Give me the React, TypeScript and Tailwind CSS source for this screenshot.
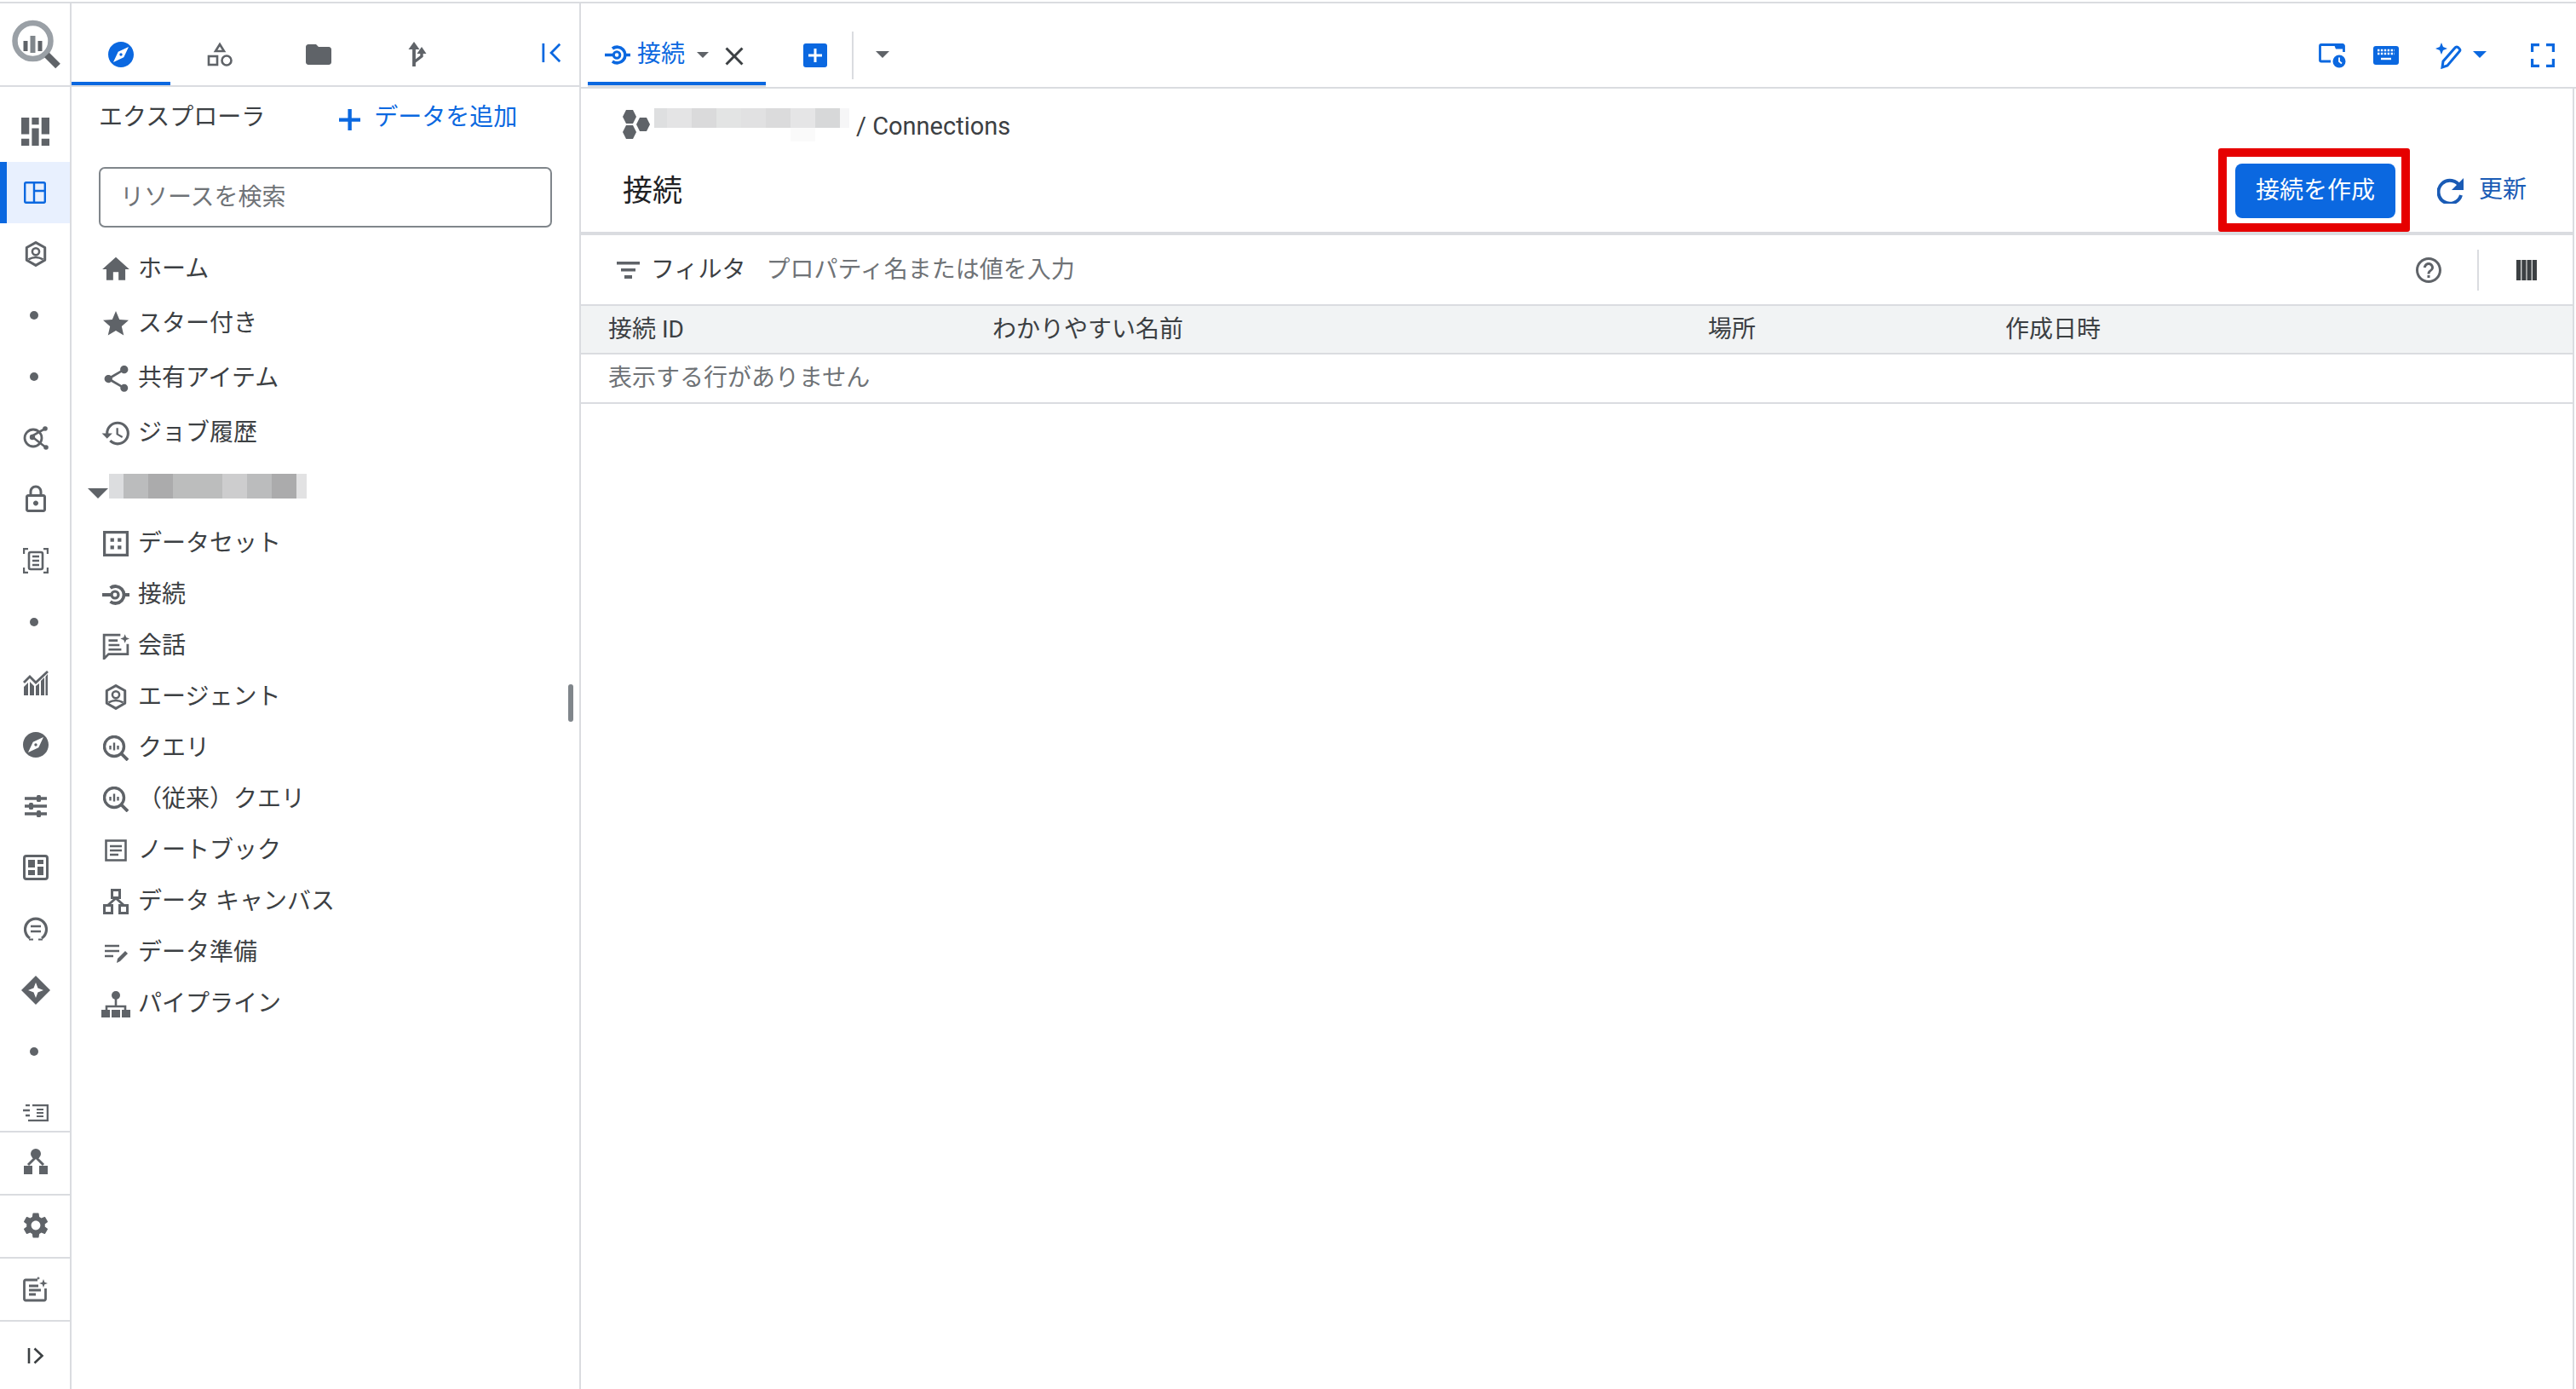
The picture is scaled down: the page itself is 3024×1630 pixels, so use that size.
import React from "react";
import {
  MdExplore, MdFolder, MdHome, MdStar, MdShare, MdHistory, MdHelpOutline, MdSettings,
  MdClose, MdOutlineLock,
} from "react-icons/md";

const Cap = ({ c = "fill-[#5f6368]", s = "w-[16px] h-[8px]" }: { c?: string; s?: string }) => (
  <svg viewBox="0 0 16 8" preserveAspectRatio="none" className={`${s} ${c}`}><path d="M0 0h16L8 8z" /></svg>
);

const S = ({ className, vb = "0 0 24 24", children }: { className: string; vb?: string; children: React.ReactNode }) => (
  <svg viewBox={vb} className={className} fill="none">{children}</svg>
);

const Dot = () => <div className="size-[10px] rounded-full bg-[#5f6368] -ml-[3px]" />;

const Agent = ({ className }: { className: string }) => (
  <S className={className} vb="0 0 24 28">
    <path d="M12 1.500l10 5.500v13.800L12 26.500 2 20.800V7z" stroke="#5f6368" strokeWidth="2.800" strokeLinejoin="round" />
    <circle cx="12" cy="11.500" r="3.800" stroke="#5f6368" strokeWidth="2.400" />
    <path d="M4 20c5-2.800 11-2.800 16 0" stroke="#5f6368" strokeWidth="2.400" />
  </S>
);

const Connection = ({ color = "#5f6368", className }: { color?: string; className: string }) => (
  <S className={className} vb="0 0 32 24">
    <path d="M0 12h12M26 12h6" stroke={color} strokeWidth="3.800" />
    <circle cx="15" cy="12" r="4" stroke={color} strokeWidth="3.200" />
    <path d="M9.500 4a10 10 0 1 1 0 16" stroke={color} strokeWidth="3.800" />
  </S>
);

const Query = ({ className }: { className: string }) => (
  <S className={className} vb="0 0 30 30">
    <circle cx="13" cy="13" r="11.500" stroke="#5f6368" strokeWidth="3.400" />
    <path d="M21 21l8 8" stroke="#5f6368" strokeWidth="3.800" />
    <path d="M8.500 12v4.500M13 8.500v9M17.500 12v4.500" stroke="#5f6368" strokeWidth="2.400" />
  </S>
);

const nav1 = [
  { t: "ホーム", i: <MdHome className="size-[38px] text-[#5f6368]" /> },
  { t: "スター付き", i: <MdStar className="size-[36px] text-[#5f6368]" /> },
  { t: "共有アイテム", i: <MdShare className="size-[37px] text-[#5f6368]" /> },
  { t: "ジョブ履歴", i: <MdHistory className="size-[37px] text-[#5f6368]" /> },
];

const nav2 = [
  {
    t: "データセット",
    i: (
      <S className="size-[30px]" vb="0 0 28 28">
        <rect x="1.500" y="1.500" width="25" height="25" stroke="#5f6368" strokeWidth="3" />
        <path d="M8 8h4v4H8zM16 8h4v4h-4zM8 16h4v4H8zM16 16h4v4h-4z" fill="#5f6368" />
      </S>
    ),
  },
  { t: "接続", i: <Connection className="w-[32px] h-[24px]" /> },
  {
    t: "会話",
    i: (
      <S className="size-[32px]" vb="0 0 30 30">
        <path d="M20 3H2v26l5-5h21V13" stroke="#5f6368" strokeWidth="2.600" />
        <path d="M7 9h10M7 14h12M7 19h14" stroke="#5f6368" strokeWidth="2.400" />
        <path d="M25 2l1.400 3.600L30 7l-3.600 1.400L25 12l-1.400-3.600L20 7l3.600-1.400z" fill="#5f6368" />
      </S>
    ),
  },
  { t: "エージェント", i: <Agent className="w-[26px] h-[30px]" /> },
  { t: "クエリ", i: <Query className="size-[30px]" /> },
  { t: "（従来）クエリ", i: <Query className="size-[30px]" /> },
  {
    t: "ノートブック",
    i: (
      <S className="size-[26px]" vb="0 0 26 26">
        <rect x="1.500" y="1.500" width="23" height="23" stroke="#5f6368" strokeWidth="2.600" />
        <path d="M6 8h14M6 13h14M6 18h10" stroke="#5f6368" strokeWidth="2.400" />
      </S>
    ),
  },
  {
    t: "データ キャンバス",
    i: (
      <S className="size-[30px]" vb="0 0 30 30">
        <path d="M10.500 1.500h9v9h-9zM1.500 19.500h9v9h-9zM19.500 19.500h9v9h-9z" stroke="#5f6368" strokeWidth="3" />
        <path d="M15 11l-9 8M15 11l9 8" stroke="#5f6368" strokeWidth="3" />
      </S>
    ),
  },
  {
    t: "データ準備",
    i: (
      <S className="size-[30px]" vb="0 0 30 30">
        <path d="M2 7h17M2 13h17M2 19h10" stroke="#5f6368" strokeWidth="2.600" />
        <path d="M16 27l1-5 9-9 3 3-9 9z" fill="#5f6368" />
      </S>
    ),
  },
  {
    t: "パイプライン",
    i: (
      <S className="size-[34px]" vb="0 0 34 32">
        <circle cx="17" cy="6" r="5" fill="#5f6368" />
        <path d="M17 10v8M6 26v-7h22v7" stroke="#5f6368" strokeWidth="2.600" />
        <path d="M0 23h10v9H0zM12 23h10v9H12zM24 23h10v9H24z" fill="#5f6368" />
      </S>
    ),
  },
];

const railIcons: React.ReactNode[] = [
  <S key="a" className="size-[33px]" vb="0 0 32 32">
    <path d="M0 0h9v19H0zM0 24h9v8H0zM12 0h8v8h-8zM12 12h8v20h-8zM23 0h9v19h-9zM23 24h9v8h-9z" fill="#5f6368" />
  </S>,
  <S key="b" className="size-[26px] -ml-[9px]" vb="0 0 26 26">
    <rect x="1.200" y="1.200" width="23.600" height="23.600" rx="1.500" stroke="#0b68e0" strokeWidth="2.400" />
    <path d="M12 1v24M12 11h13" stroke="#0b68e0" strokeWidth="2.400" />
  </S>,
  <Agent key="c" className="w-[26px] h-[30px]" />,
  <Dot key="d" />,
  <Dot key="e" />,
  <S key="f" className="size-[30px]" vb="0 0 30 30">
    <circle cx="12" cy="15" r="10" stroke="#5f6368" strokeWidth="2.800" />
    <path d="M10 13l16-9M10 13l18 14" stroke="#5f6368" strokeWidth="2.600" />
    <circle cx="11" cy="14" r="3.200" fill="#5f6368" />
    <circle cx="26" cy="4" r="2.800" fill="#5f6368" />
    <circle cx="27" cy="26" r="2.800" fill="#5f6368" />
  </S>,
  <MdOutlineLock key="g" className="size-[36px] text-[#5f6368]" />,
  <S key="h" className="size-[30px]" vb="0 0 30 30">
    <path d="M1 7V1h5M24 1h5v6M1 23v6h5M24 29h5v-6" stroke="#5f6368" strokeWidth="2.400" />
    <rect x="7" y="5" width="16" height="20" rx="2" stroke="#5f6368" strokeWidth="2.600" />
    <path d="M11 10h8M11 15h8M11 20h8" stroke="#5f6368" strokeWidth="2.400" />
  </S>,
  <Dot key="i" />,
  <S key="j" className="size-[30px]" vb="0 0 30 30">
    <path d="M1 29V19l5-5v15zM8 29V13l5 5v11zM15 29V18l4-3v14zM21 29V12l4-4v21zM26.500 29V7L29 4v25z" fill="#5f6368" />
    <path d="M1 14l7-7 7 7L29 1" stroke="#5f6368" strokeWidth="2.800" />
  </S>,
  <MdExplore key="k" className="size-[36px] text-[#5f6368]" />,
  <S key="l" className="size-[26px]" vb="0 0 26 26">
    <path d="M0 4h26M0 13h26M0 22h26" stroke="#5f6368" strokeWidth="3.600" />
    <rect x="14" y="0" width="5" height="8" rx="1.500" fill="#5f6368" />
    <rect x="5" y="9" width="5" height="8" rx="1.500" fill="#5f6368" />
    <rect x="14" y="18" width="5" height="8" rx="1.500" fill="#5f6368" />
  </S>,
  <S key="m" className="size-[30px]" vb="0 0 30 30">
    <rect x="1.500" y="1.500" width="27" height="27" rx="2.500" stroke="#5f6368" strokeWidth="3" />
    <path d="M6 6h8v9H6zM17 6h7v5h-7zM17 14h7v10h-7zM6 18h8v6H6z" fill="#5f6368" />
  </S>,
  <S key="n" className="size-[30px]" vb="0 0 30 30">
    <path d="M8 26A12.500 12.500 0 1 1 22 26" stroke="#5f6368" strokeWidth="3.200" />
    <path d="M7 27.500h5M18 27.500h5" stroke="#5f6368" strokeWidth="2.200" />
    <path d="M9 12h12M9 18h12" stroke="#5f6368" strokeWidth="2.400" />
  </S>,
  <S key="o" className="size-[36px]" vb="0 0 36 36">
    <path d="M18 1l17 17-17 17L1 18z" fill="#5f6368" />
    <path d="M18 9l2.500 6.500L27 18l-6.500 2.500L18 27l-2.500-6.500L9 18l6.500-2.500z" fill="#fff" />
  </S>,
  <Dot key="p" />,
  <S key="q" className="w-[30px] h-[20px]" vb="0 0 30 20">
    <path d="M11 1h18v18h-4M25 19H11" stroke="#5f6368" strokeWidth="2.600" />
    <path d="M16 6h8M16 10h8M16 14h8" stroke="#5f6368" strokeWidth="2.200" />
    <path d="M3 1h5M0 7h8M3 13h5M6 19h5" stroke="#5f6368" strokeWidth="2.400" />
  </S>,
];

const NavRow = ({ t, i, h }: { t: string; i: React.ReactNode; h: string }) => (
  <div className={`flex items-center ${h}`}>
    <div className="w-[40px] flex justify-center shrink-0">{i}</div>
    <span className="ml-[6px] text-[28px] leading-none text-[#3c4043]">{t}</span>
  </div>
);

export default function App() {
  return (
    <div className="w-[3024px] h-[1630px] overflow-hidden bg-white pt-[2px] font-['Roboto','Noto_Sans_CJK_JP',sans-serif]">
      <div className="h-[1628px] flex border-t-2 border-[#dadce0]">
        {/* rail */}
        <aside className="w-[84px] shrink-0 border-r-2 border-[#dadce0] flex flex-col">
          <div className="h-[98px] shrink-0 border-b-2 border-[#dadce0] flex items-center justify-center pl-[3px]">
            <S className="size-[60px] mt-[2px]" vb="0 0 60 60">
              <circle cx="25.500" cy="25" r="21" stroke="#9aa0a6" strokeWidth="6.500" />
              <path d="M42 41.500l13 13" stroke="#5f6368" strokeWidth="8" />
              <path d="M17 25v12" stroke="#5f6368" strokeWidth="5" />
              <path d="M25.500 19v20" stroke="#80868b" strokeWidth="6" />
              <path d="M34 25v12" stroke="#5f6368" strokeWidth="5" />
            </S>
          </div>
          <div className="flex-1 overflow-hidden pt-[16px] min-h-0">
            {railIcons.map((ic, n) => (
              <div
                key={n}
                className={
                  n === 1
                    ? "h-[72px] flex items-center justify-center bg-[#e8f0fe] border-l-8 border-[#0b68e0] pl-[1px]"
                    : "h-[72px] flex items-center justify-center pl-[1px]"
                }
              >
                {ic}
              </div>
            ))}
          </div>
          <div className="h-[74px] shrink-0 border-t-2 border-[#dadce0] flex items-center justify-center pb-[4px] pl-[1px]">
            <S className="w-[28px] h-[30px]" vb="0 0 28 30">
              <circle cx="14" cy="6" r="6" fill="#5f6368" />
              <path d="M14 10L5 19M14 10l9 9" stroke="#5f6368" strokeWidth="3" />
              <path d="M0 20h10v10H0zM18 20h10v10H18z" fill="#5f6368" />
            </S>
          </div>
          <div className="h-[74px] shrink-0 border-t-2 border-[#dadce0] flex items-center justify-center pb-[2px] pl-[1px]">
            <MdSettings className="size-[36px] text-[#5f6368]" />
          </div>
          <div className="h-[74px] shrink-0 border-t-2 border-[#dadce0] flex items-center justify-center pl-[1px]">
            <S className="size-[30px]" vb="0 0 30 30">
              <path d="M17 4H3a1.500 1.500 0 0 0-1.500 1.500v21A1.500 1.500 0 0 0 3 28h22a1.500 1.500 0 0 0 1.500-1.500V14" stroke="#5f6368" strokeWidth="2.800" />
              <path d="M7 11h11M7 16h14M7 21h8" stroke="#5f6368" strokeWidth="2.800" />
              <path d="M24 3l1.300 3.700L29 8l-3.700 1.300L24 13l-1.300-3.700L19 8l3.700-1.300zM18 0l.7 1.300L20 2l-1.300.7L18 4l-.7-1.300L16 2l1.300-.7z" fill="#5f6368" />
            </S>
          </div>
          <div className="h-[81px] shrink-0 border-t-2 border-[#dadce0] flex items-center justify-center pl-[1px]">
            <S className="w-[20px] h-[20px]" vb="0 0 20 20">
              <path d="M2 1v18" stroke="#3c4043" strokeWidth="2.600" />
              <path d="M8.500 1.500l9 8.500-9 8.500" stroke="#3c4043" strokeWidth="2.600" />
            </S>
          </div>
        </aside>

        {/* explorer panel */}
        <section className="w-[598px] shrink-0 border-r-2 border-[#dadce0] flex flex-col relative">
          <div className="h-[98px] shrink-0 border-b-2 border-[#dadce0] flex">
            <div className="w-[116px] h-full border-b-4 border-[#0b68e0] flex items-center justify-center pt-[28px]">
              <MdExplore className="size-[36px] text-[#0b68e0]" />
            </div>
            <div className="w-[116px] h-full flex items-center justify-center pt-[24px]">
              <S className="size-[30px]" vb="0 0 30 30">
                <path d="M15 3l5 8H10z" stroke="#5f6368" strokeWidth="2.600" />
                <rect x="2" y="17" width="10" height="10" stroke="#5f6368" strokeWidth="2.600" />
                <circle cx="23" cy="22" r="5.500" stroke="#5f6368" strokeWidth="2.600" />
              </S>
            </div>
            <div className="w-[116px] h-full flex items-center justify-center pt-[24px]">
              <MdFolder className="size-[36px] text-[#5f6368]" />
            </div>
            <div className="w-[116px] h-full flex items-center justify-center pt-[24px]">
              <S className="size-[30px]" vb="0 0 30 30">
                <path d="M11 29V5" stroke="#5f6368" strokeWidth="3.800" />
                <path d="M11 0l6.500 9h-13z" fill="#5f6368" />
                <path d="M11 24l9-7v-5" stroke="#5f6368" strokeWidth="3.400" />
                <path d="M20 6l5.500 8h-11z" fill="#5f6368" />
              </S>
            </div>
            <div className="flex-1 flex items-center justify-center pt-[19px] pl-[68px]">
              <S className="size-[24px]" vb="0 0 26 26">
                <path d="M2 1v24" stroke="#0b68e0" strokeWidth="3" />
                <path d="M23 2L12 13l11 11" stroke="#0b68e0" strokeWidth="3" />
              </S>
            </div>
          </div>
          <div className="pl-[32px] flex items-center h-[70px] pt-[2px] shrink-0">
            <span className="text-[28px] leading-none text-[#3c4043]">エクスプローラ</span>
            <svg viewBox="0 0 24 24" className="ml-[87px] size-[25px] mt-[4px]"><path d="M10 0h4.200v10H24v4.200H14.200V24H10V14.200H0V10h10z" fill="#0b68e0" /></svg>
            <span className="ml-[16px] text-[28px] leading-none text-[#0b68e0]">データを追加</span>
          </div>
          <div className="ml-[32px] mt-[24px] h-[71px] w-[532px] shrink-0 border-2 border-[#80868b] rounded-[7px] flex items-center pl-[23px] text-[28px] text-[#6f7377]">
            リソースを検索
          </div>
          <div className="pl-[32px] pt-[17px] shrink-0">
            {nav1.map((n) => (
              <NavRow key={n.t} t={n.t} i={n.i} h="h-[64px]" />
            ))}
          </div>
          <div className="h-[68px] shrink-0 flex items-center pl-[19px]">
            <div className="mt-[10px]"><Cap s="w-[24px] h-[12px]" /></div>
            <div className="flex h-[29px] ml-[1px] -mt-[7px]">
              <div className="w-[17px] bg-[#dcdddf]" />
              <div className="w-[29px] bg-[#bbbcbd]" />
              <div className="w-[29px] bg-[#ababac]" />
              <div className="w-[58px] bg-[#bcbdbd]" />
              <div className="w-[29px] bg-[#cdcdce]" />
              <div className="w-[29px] bg-[#bbbcbd]" />
              <div className="w-[29px] bg-[#ababac]" />
              <div className="w-[12px] bg-[#e2e2e3]" />
            </div>
          </div>
          <div className="pl-[32px] shrink-0">
            {nav2.map((n) => (
              <NavRow key={n.t} t={n.t} i={n.i} h="h-[60px]" />
            ))}
          </div>
          <div className="absolute left-[583px] top-[799px] w-[6px] h-[44px] rounded-full bg-[#80868b]" />
        </section>

        {/* main */}
        <main className="flex-1 min-w-0 flex flex-col">
          <div className="h-[100px] shrink-0 border-b-2 border-[#dadce0] flex">
            <div className="ml-[8px] w-[209px] h-[98px] flex flex-col shrink-0">
              <div className="h-[96px] border-b-4 border-[#0b68e0] flex items-center pl-[20px] pt-[28px]">
                <Connection color="#0b68e0" className="w-[30px] h-[23px]" />
                <span className="ml-[8px] text-[28px] leading-none text-[#0b68e0]">接続</span>
                <div className="ml-[14px] h-[7px] flex"><Cap s="w-[14px] h-[7px]" /></div>
                <MdClose className="ml-[12px] size-[36px] text-[#3c4043] mt-[3px]" />
              </div>
              <div className="h-[2px] bg-[#dadce0]" />
            </div>
            <div className="ml-[44px] w-[28px] h-[28px] self-center mt-[24px] rounded-[3px] bg-[#0b68e0] flex items-center justify-center">
              <svg viewBox="0 0 16 16" className="size-[16px]"><path d="M6.500 0h3v6.500H16v3H9.500V16h-3V9.500H0v-3h6.500z" fill="#fff" /></svg>
            </div>
            <div className="ml-[29px] w-[2px] h-[56px] self-center mt-[24px] bg-[#dadce0]" />
            <div className="ml-[26px] self-center mt-[22px] h-[8px] flex"><Cap /></div>
            <div className="ml-auto flex items-center pr-[25px] self-center mt-[24px]">
              <S className="size-[32px]" vb="0 0 32 32">
                <path d="M14 23H3a1.500 1.500 0 0 1-1.500-1.500V5A1.500 1.500 0 0 1 3 3.500h25A1.500 1.500 0 0 1 29.500 5v7" stroke="#0b68e0" strokeWidth="2.800" />
                <path d="M18 3.500h12v5H20z" fill="#0b68e0" />
                <circle cx="24" cy="23" r="7.500" fill="#0b68e0" />
                <path d="M24 18.500V23l3 2.500" stroke="#fff" strokeWidth="1.800" />
              </S>
              <S className="ml-[31px] w-[32px] h-[24px]" vb="0 0 32 24">
                <rect width="30" height="22" x="1" y="1" rx="3" fill="#0b68e0" />
                <path d="M6 6h20M6 10h20" stroke="#fff" strokeWidth="2.400" strokeDasharray="2.400 1.500" />
                <path d="M10 16h12" stroke="#fff" strokeWidth="2.400" />
              </S>
              <S className="ml-[41px] size-[32px]" vb="0 0 32 32">
                <path d="M8 1l2 5 5 2-5 2-2 5-2-5-5-2 5-2z" fill="#0b68e0" />
                <path d="M9 30l1-7L24 7a2.500 2.500 0 0 1 4 0l1 1a2.500 2.500 0 0 1 0 3.500L15 28z" stroke="#0b68e0" strokeWidth="3" />
              </S>
              <div className="ml-[13px] -mt-[2px] h-[8px] flex"><Cap c="fill-[#0b68e0]" /></div>
              <S className="ml-[52px] size-[28px]" vb="0 0 28 28">
                <path d="M1.500 10V1.500H10M18 1.500h8.500V10M1.500 18v8.500H10M18 26.500h8.500V18" stroke="#0b68e0" strokeWidth="3.400" />
              </S>
            </div>
          </div>

          <div className="flex-1 min-h-0 mr-[2px] border-r-2 border-[#dadce0]">
            <div className="h-[168px] flex">
              <div className="flex-1 pl-[49px]">
                <div className="h-[88px] flex items-center">
                  <S className="w-[34px] h-[34px] -mt-[4px]" vb="0 0 34 34">
                    <path d="M4 0h8l4 8-4 8H4L0 8zM4 18h8l4 8-4 8H4l-4-8zM20 9h8l4 8-4 8h-8l-4-8z" fill="#5f6368" />
                  </S>
                  <div className="ml-[3px] -mt-[19px] relative">
                    <div className="flex h-[23px]">
                      <div className="w-[15px] bg-[#dedfe0]" />
                      <div className="w-[29px] bg-[#e4e4e5]" />
                      <div className="w-[29px] bg-[#dadadb]" />
                      <div className="w-[29px] bg-[#e3e4e4]" />
                      <div className="w-[29px] bg-[#e1e1e2]" />
                      <div className="w-[29px] bg-[#dbdbdc]" />
                      <div className="w-[29px] bg-[#e5e5e6]" />
                      <div className="w-[29px] bg-[#d7d8d9]" />
                      <div className="w-[11px] bg-[#f6f6f7]" />
                    </div>
                    <div className="absolute left-[160px] top-[23px] w-[29px] h-[16px] bg-[#fafafa]" />
                  </div>
                  <span className="ml-[8px] text-[29px] leading-none text-[#3c4043]">/ Connections</span>
                </div>
                <div className="text-[35px] leading-none text-[#202124] mt-[15px]">接続</div>
              </div>
              <div className="flex items-center self-end h-[98px] pr-[54px] shrink-0">
                <div className="w-[225px] h-[98px] border-[10px] border-[#e60000] rounded-[3px] flex pt-[8px] pl-[10px]">
                  <button className="w-[188px] h-[64px] rounded-[8px] bg-[#0b68e0] text-white text-[28px]">接続を作成</button>
                </div>
                <S className="ml-[32px] size-[32px]" vb="0 0 32 32">
                  <path d="M27 12A13.500 13.500 0 1 0 28 22" stroke="#1a5bb5" strokeWidth="4" />
                  <path d="M31 2v14H17z" fill="#1a5bb5" />
                </S>
                <span className="ml-[17px] text-[28px] leading-none text-[#1a5bb5]">更新</span>
              </div>
            </div>
            <div className="h-[4px] bg-[#dadce0]" />
            <div className="h-[81px] flex items-center pl-[42px] pr-[42px]">
              <svg viewBox="0 0 27 20" className="w-[27px] h-[20px]"><path d="M0 0h27v3.500H0zM5 8h17v3.500H5zM9 16h9v4H9z" fill="#5f6368" /></svg>
              <span className="ml-[13px] text-[28px] leading-none text-[#3c4043]">フィルタ</span>
              <span className="ml-[24px] text-[28px] leading-none text-[#6f7377]">プロパティ名または値を入力</span>
              <MdHelpOutline className="ml-auto size-[36px] text-[#5f6368]" />
              <div className="ml-[39px] w-[2px] h-[48px] bg-[#dadce0]" />
              <svg viewBox="0 0 24 24" className="ml-[44px] size-[24px]"><path d="M0 0h5.200v24H0zM6.300 0h5.200v24H6.300zM12.500 0h5.200v24h-5.200zM18.800 0H24v24h-5.200z" fill="#3c4043" /></svg>
            </div>
            <div className="h-[59px] border-y-2 border-[#dadce0] bg-[#f1f3f4] flex items-center text-[28px] leading-none text-[#3c4043] pl-[32px]">
              <div className="w-[451px]">接続 ID</div>
              <div className="w-[840px]">わかりやすい名前</div>
              <div className="w-[349px]">場所</div>
              <div>作成日時</div>
            </div>
            <div className="h-[58px] border-b-2 border-[#dadce0] flex items-center pl-[32px] text-[28px] leading-none text-[#6f7377]">
              表示する行がありません
            </div>
          </div>
        </main>
      </div>
    </div>
  );
}
